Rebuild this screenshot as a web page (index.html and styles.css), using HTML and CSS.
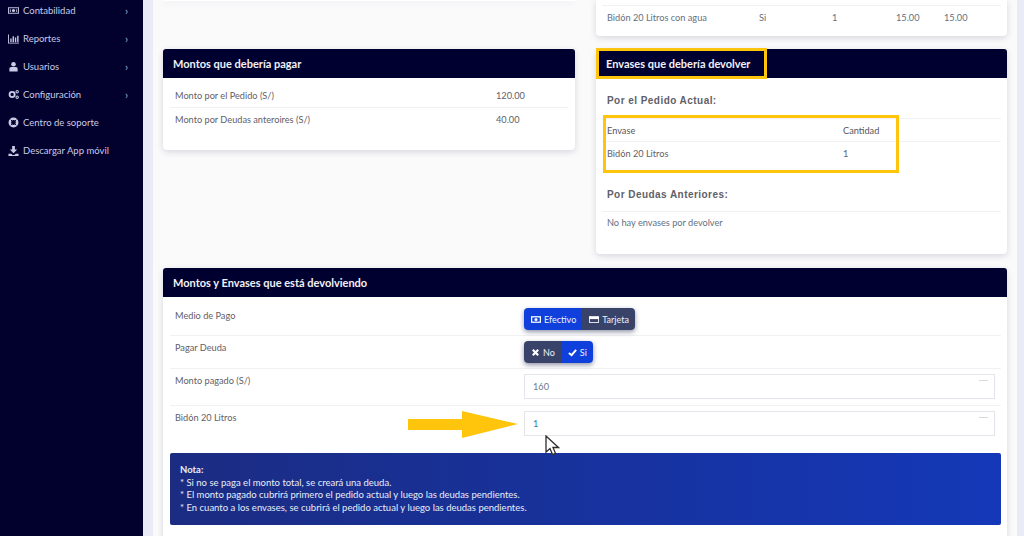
FILE: index.html
```html
<!DOCTYPE html>
<html lang="es">
<head>
<meta charset="utf-8">
<title>Pedido</title>
<link rel="stylesheet" href="styles.css">
</head>
<body>
<div class="app">
  <nav class="sidebar">
    <a class="nav-item"><svg class="nav-icon" viewBox="0 0 12 12"><path d="M0 2.500h12v7H0z" fill="#c9cbe6"/><path d="M1 3.500h10v5H1z" fill="#02012e"/><circle cx="6" cy="6" r="1.700" fill="#c9cbe6"/><path d="M2 4.500h1v3H2zM9 4.500h1v3H9z" fill="#c9cbe6"/></svg><span class="nav-label">Contabilidad</span><span class="chev">›</span></a>
    <a class="nav-item"><svg class="nav-icon" viewBox="0 0 12 12"><path d="M0 1.500h1v9h11v1H0z" fill="#c9cbe6"/><path d="M2.500 6h1.500v4H2.500zM5 3.500h1.500V10H5zM7.500 5H9v5H7.500zM10 3h1.500v7H10z" fill="#c9cbe6"/></svg><span class="nav-label">Reportes</span><span class="chev">›</span></a>
    <a class="nav-item"><svg class="nav-icon" viewBox="0 0 12 12"><circle cx="6" cy="3.500" r="2.500" fill="#c9cbe6"/><path d="M1.500 11.500V8.500q0-2 2-2h5q2 0 2 2v3z" fill="#c9cbe6"/></svg><span class="nav-label">Usuarios</span><span class="chev">›</span></a>
    <a class="nav-item"><svg class="nav-icon" viewBox="0 0 12 12"><circle cx="4.500" cy="6" r="2.800" fill="none" stroke="#c9cbe6" stroke-width="2"/><circle cx="10" cy="3" r="1.300" fill="none" stroke="#c9cbe6" stroke-width="1.200"/><circle cx="10" cy="9" r="1.300" fill="none" stroke="#c9cbe6" stroke-width="1.200"/></svg><span class="nav-label">Configuración</span><span class="chev">›</span></a>
    <a class="nav-item"><svg class="nav-icon" viewBox="0 0 12 12"><circle cx="6" cy="6" r="4" fill="none" stroke="#c9cbe6" stroke-width="2.800"/><path d="M3 3l6 6M9 3l-6 6" stroke="#02012e" stroke-width="1"/></svg><span class="nav-label">Centro de soporte</span></a>
    <a class="nav-item"><svg class="nav-icon" viewBox="0 0 12 12"><path d="M4.500 1h3v4H10L6 9 2 5h2.500zM.5 9.500h3L5 10.800h2l1.500-1.300h3V12H.5z" fill="#c9cbe6"/></svg><span class="nav-label">Descargar App móvil</span></a>
  </nav>
  <div class="gutter"></div>
  <main class="content">
    <div class="columns">
      <div class="column">
        <section class="card stub-left"></section>
        <section class="card pay-card">
          <h2 class="card-head">Montos que debería pagar</h2>
          <div class="card-body">
            <div class="row pay-row"><span class="pay-label">Monto por el Pedido (S/)</span><span>120.00</span></div>
            <div class="row pay-row"><span class="pay-label">Monto por Deudas anteroires (S/)</span><span>40.00</span></div>
          </div>
        </section>
      </div>
      <div class="column">
        <section class="card stub-right">
          <div class="row stub-row"><span class="c-name">Bidón 20 Litros con agua</span><span class="c-si">Si</span><span class="c-qty">1</span><span class="c-price">15.00</span><span>15.00</span></div>
        </section>
        <section class="card return-card">
          <h2 class="card-head">Envases que debería devolver</h2>
          <div class="mark mark-head"></div>
          <div class="card-body return-body">
            <h3 class="sub-title first">Por el Pedido Actual:</h3>
            <div class="row return-row head"><span class="c-env">Envase</span><span>Cantidad</span></div>
            <div class="row return-row"><span class="c-env">Bidón 20 Litros</span><span>1</span></div>
            <div class="mark mark-table"></div>
            <h3 class="sub-title second">Por Deudas Anteriores:</h3>
            <div class="row return-row none">No hay envases por devolver</div>
          </div>
        </section>
      </div>
    </div>
    <section class="card form-card">
      <h2 class="card-head">Montos y Envases que está devolviendo</h2>
      <div class="form-body">
        <div class="form-row r1"><span class="form-label">Medio de Pago</span>
          <div class="btn-group">
            <span class="btn active"><svg class="btn-icon" viewBox="0 0 12 10"><path d="M0 1h12v8H0z" fill="#fff"/><path d="M1.500 2.500h9v5h-9z" fill="#1040dc"/><circle cx="6" cy="5" r="1.800" fill="#fff"/></svg>Efectivo</span>
            <span class="btn"><svg class="btn-icon" viewBox="0 0 12 10"><path d="M0 1h12v8H0z" fill="#fff"/><path d="M1 4.500h10v3.500H1z" fill="#39436a"/></svg>Tarjeta</span>
          </div>
        </div>
        <div class="form-row r2"><span class="form-label">Pagar Deuda</span>
          <div class="btn-group">
            <span class="btn"><svg class="btn-icon small" viewBox="0 0 10 10"><path d="M2 2l6 6M8 2l-6 6" stroke="#fff" stroke-width="2.400"/></svg>No</span>
            <span class="btn active"><svg class="btn-icon small" viewBox="0 0 10 10"><path d="M1 5.500l3 2.500 5-6" fill="none" stroke="#fff" stroke-width="2.200"/></svg>Si</span>
          </div>
        </div>
        <div class="form-row r3"><span class="form-label">Monto pagado (S/)</span>
          <div class="field">160<i class="spin"></i></div>
        </div>
        <div class="form-row r4"><span class="form-label">Bidón 20 Litros</span>
          <div class="field accent">1<i class="spin"></i></div>
          <svg class="arrow" viewBox="0 0 110 27"><path d="M0 8h54V0l56 13-56 14v-8H0z" fill="#ffc40c"/></svg>
          <svg class="cursor" viewBox="0 0 15 21"><path d="M1 1v16l4-3.500 2.500 6 3-1.200-2.500-5.800h5.500z" fill="#fff" stroke="#2c2c2c" stroke-width="1.300"/></svg>
        </div>
        <div class="note">
          <strong>Nota:</strong><br>
          * Si no se paga el monto total, se creará una deuda.<br>
          * El monto pagado cubrirá primero el pedido actual y luego las deudas pendientes.<br>
          * En cuanto a los envases, se cubrirá el pedido actual y luego las deudas pendientes.
        </div>
      </div>
    </section>
  </main>
  <div class="edge"></div>
</div>
</body>
</html>
```

FILE: styles.css
```css
* { box-sizing: border-box; }
html, body { margin: 0; height: 536px; overflow: hidden; }
body { font-family: "Lato", sans-serif; font-size: 9.2px; color: #5f6068; background: #fafafb; }
.app { display: flex; height: 536px; overflow: hidden; }

.sidebar { width: 143px; flex: none; background: #02012e; overflow: hidden; }
.nav-item { display: flex; align-items: center; height: 28px; padding: 0 15px 0 8px; color: #c9cbe6; font-size: 9.5px; position: relative; top: -4px; }
.nav-icon { width: 11px; height: 11px; margin-right: 4px; flex: none; }
.nav-label { flex: 1; }
.chev { font-size: 11px; color: #a9abcc; }

.gutter { width: 10px; flex: none; background: #ebebf7; }
.edge { width: 7px; flex: none; background: #ebebf7; }
.content { flex: 1; min-width: 0; padding: 0 10px; height: 536px; overflow: hidden; }

.columns { display: grid; grid-template-columns: 412px 411px; column-gap: 21px; align-items: start; }
.card { background: #fff; border-radius: 4px; box-shadow: 0 2px 6px rgba(40, 40, 70, .16); position: relative; }
.stub-left { height: 1px; margin-bottom: 48px; }
.stub-right { height: 36px; margin-bottom: 13px; padding: 5px 6px 0; border-radius: 0 0 4px 4px; }
.card-head { margin: 0; height: 29px; padding: 0 10px; display: flex; align-items: center; background: #000030; color: #f1f1f6; font-size: 11px; font-weight: 700; border-radius: 3px 3px 0 0; }

.row { display: flex; align-items: center; border-top: 1px solid #f1f1f4; }
.stub-row { height: 23px; padding-left: 5px; color: #63707f; }
.c-name { width: 152px; }
.c-si { width: 73px; }
.c-qty { width: 64px; }
.c-price { width: 48px; }

.pay-card { height: 101px; }
.card-body { padding: 6px 7px 0; }
.pay-row { height: 24px; padding: 0 5px; border-top: 0; border-bottom: 1px solid #f1f1f4; }
.pay-row:last-child { border-bottom: 0; height: 22px; }
.pay-row .pay-label { width: 321px; }

.return-card { height: 205px; }
.return-body { padding: 0 6px; position: relative; }
.sub-title { margin: 0; font-family: "Liberation Sans", sans-serif; font-size: 10px; font-weight: 700; letter-spacing: .45px; color: #5f6068; padding-left: 5px; }
.sub-title.first { padding-top: 17px; height: 40px; }
.sub-title.second { padding-top: 25px; height: 47px; }
.return-row { height: 23px; padding-left: 5px; }
.return-row.head { color: #55565e; }
.return-row.none { height: 22px; color: #63707f; }
.c-env { width: 236px; }

.mark { position: absolute; border: 3px solid #ffc40c; pointer-events: none; }
.mark-head { left: 0; top: -1px; width: 171px; height: 31px; }
.mark-table { left: 7px; top: 37px; width: 296px; height: 58px; }

.form-card { margin-top: 14px; height: 300px; }
.form-body { padding: 0 6px 0 7px; }
.form-row { display: flex; align-items: flex-start; border-bottom: 1px solid #f1f1f4; padding-left: 5px; position: relative; }
.form-label { width: 349px; flex: none; }
.r1 { height: 39px; }
.r2 { height: 33px; }
.r3 { height: 37px; }
.r4 { height: 47px; border-bottom: 0; }
.r1 .form-label { padding-top: 13px; }
.r2 .form-label { padding-top: 6px; }
.r3 .form-label { padding-top: 6px; }
.r4 .form-label { padding-top: 6px; }
.r1 .btn-group { margin-top: 11px; }
.r2 .btn-group { margin-top: 5px; }
.r3 .field { margin-top: 5px; }
.r4 .field { margin-top: 5px; }

.btn-group { display: flex; border-radius: 4px; box-shadow: 0 2px 5px rgba(10, 20, 60, .45); }
.btn { height: 22px; display: flex; align-items: center; padding: 0 6px 0 7px; background: #39436a; color: #eef0fa; font-size: 9px; }
.btn:first-child { border-radius: 4px 0 0 4px; }
.btn:last-child { border-radius: 0 4px 4px 0; }
.btn.active { background: #1040dc; }
.btn-icon { width: 10px; height: 9px; margin-right: 3px; }
.btn-icon.small { width: 9px; height: 9px; }

.field { width: 471px; height: 25px; border: 1px solid #e2e5ea; display: flex; align-items: center; padding-left: 8px; color: #6b7a8c; position: relative; background: #fff; }
.field.accent { color: #2f7f9f; }
.spin { position: absolute; right: 6px; top: 5px; width: 9px; height: 1px; background: #d8dade; }

.arrow { position: absolute; left: 238px; top: 5px; width: 110px; height: 27px; }
.cursor { position: absolute; left: 375px; top: 29px; width: 15px; height: 21px; }

.note { height: 72px; padding: 11px 10px 0; background: linear-gradient(90deg, #1b2c82, #1438b8); color: #e9edf9; border-radius: 2px; line-height: 12.5px; font-size: 9.5px; }
.note strong { font-weight: 700; }
```
